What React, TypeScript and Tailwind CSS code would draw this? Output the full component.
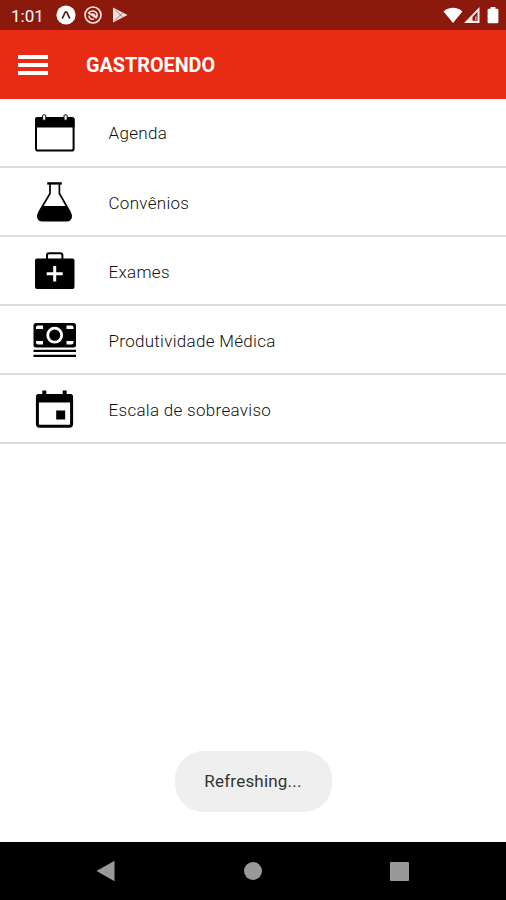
import { ReactNode } from "react";

type MenuItem = {
  label: string;
  icon: ReactNode;
};

const AgendaIcon = () => (
  <svg viewBox="0 0 48 48" className="w-12 h-12">
    <rect x="5" y="8" width="37.6" height="32.5" rx="1.8" fill="#fff" stroke="#000" strokeWidth="2" />
    <path d="M4 17.4V9.2a2 2 0 0 1 2-2h35.5a2 2 0 0 1 2 2v8.2z" />
    <rect x="11.6" y="4.8" width="3.2" height="5.4" rx="1" fill="#fff" stroke="#000" />
    <rect x="33" y="4.8" width="3.2" height="5.4" rx="1" fill="#fff" stroke="#000" />
  </svg>
);

const FlaskIcon = () => (
  <svg viewBox="0 0 48 48" className="w-12 h-12">
    <path d="M16.2 3.2h14.6v2.4H16.2z" />
    <path
      d="M19 4.500v10L8.400 32.500c-2.600 4.600-1.800 8.700 3.200 8.700h23.800c5 0 5.800-4.100 3.200-8.700L28.400 14.500v-10"
      fill="none"
      stroke="#000"
      strokeWidth="1.700"
    />
    <path d="M12 27h23l4.400 6.600c2.400 4.400 1.400 8.900-3.600 8.900H11.200c-5 0-6-4.500-3.600-8.900z" />
  </svg>
);

const ExamIcon = () => (
  <svg viewBox="0 0 48 48" className="w-12 h-12">
    <path d="M16 11V7.400a2.200 2.200 0 0 1 2.200-2.200h11a2.200 2.200 0 0 1 2.200 2.200V11" fill="none" stroke="#000" strokeWidth="2" />
    <rect x="4" y="10.500" width="39.500" height="30.500" rx="2" />
    <path d="M23.700 18v15.500M15.700 25.700h16" stroke="#fff" strokeWidth="3" />
  </svg>
);

const MoneyIcon = () => (
  <svg viewBox="0 0 48 48" className="w-12 h-12">
    <rect x="2.500" y="6" width="42.500" height="24.500" rx="2.500" />
    <circle cx="23.700" cy="18.200" r="7" fill="none" stroke="#fff" strokeWidth="2.800" />
    <path
      d="M5 12v-1.400a2 2 0 0 1 2-2h5V12zM42.500 12v-1.400a2 2 0 0 0-2-2h-5V12zM5 24v1.600a2 2 0 0 0 2 2h5V24zM42.500 24v1.600a2 2 0 0 1-2 2h-5V24z"
      fill="#fff"
    />
    <path d="M2.500 33.900H45M2.500 38.900H45" stroke="#000" strokeWidth="2.400" />
  </svg>
);

const ScheduleIcon = () => (
  <svg viewBox="0 0 48 48" className="w-12 h-12">
    <rect x="6.400" y="9.500" width="34.200" height="30.800" rx="2.200" fill="#fff" stroke="#000" strokeWidth="3" />
    <path d="M5 16.500V11a3 3 0 0 1 3-3h31a3 3 0 0 1 3 3v5.500z" />
    <path d="M11.300 4.600h4V10h-4zM31.700 4.600h4V10h-4zM25.200 24.600h9v9h-9z" />
  </svg>
);

const items: MenuItem[] = [
  { label: "Agenda", icon: <AgendaIcon /> },
  { label: "Convênios", icon: <FlaskIcon /> },
  { label: "Exames", icon: <ExamIcon /> },
  { label: "Produtividade Médica", icon: <MoneyIcon /> },
  { label: "Escala de sobreaviso", icon: <ScheduleIcon /> },
];

const StatusBar = () => (
  <div className="flex items-center justify-between h-[30px] bg-[#8b1a0c] pl-[11px] pr-[7px] text-white">
    <div className="flex items-center">
      <span className="w-[45px] text-[17px] leading-none pt-0.5">1:01</span>
      <svg viewBox="0 0 20 20" className="w-5 h-5">
        <circle cx="10" cy="10" r="9.6" fill="#fff" />
        <path d="M6.200 13.600L9.300 7h1.400l3.100 6.600" fill="none" stroke="#54200f" strokeWidth="1.700" />
      </svg>
      <svg viewBox="0 0 20 20" className="w-5 h-5 ml-[7px]" fill="none" stroke="#fbe3df">
        <circle cx="10" cy="10" r="8" strokeWidth="1.700" />
        <path d="M6 7.500C8 5.400 12 5.400 13.600 8c1 2 .4 3.800-.6 5M6 10.500c0 2.600 2.200 4.200 5 3.800M5 7.500l8.500 5.500M8.500 9.200c2-.8 3.600.4 3.500 2.400" strokeWidth="1.500" />
      </svg>
      <svg viewBox="0 0 16 16" className="w-4 h-4 ml-[9px]">
        <path d="M1 .5L15.500 8 1 15.500z" fill="#f6e2df" />
        <path d="M3 2.500L10.500 10M3 13.500L10.500 6" stroke="#a65b52" strokeWidth=".9" />
      </svg>
    </div>
    <div className="flex items-center">
      <svg viewBox="0 0 20 18" className="w-5 h-[18px]">
        <path d="M10 17L.600 5.400C5.500.400 14.500.400 19.400 5.400z" fill="#fff" />
      </svg>
      <svg viewBox="0 0 18 18" className="w-[18px] h-[18px]">
        <path d="M1 17L16.500 1v16z" fill="#fbe9e7" />
        <path d="M9.500 14.800V11l5-5.200v9z" fill="#8b1a0c" />
        <path d="M12 14v-3l1.500-1.500V14z" fill="#d79d96" />
      </svg>
      <svg viewBox="0 0 12 18" className="w-3 h-[18px] ml-1.5">
        <path d="M3.600 1h4.800v1.800h1.800a1.200 1.200 0 0 1 1.200 1.200v12a1.200 1.200 0 0 1-1.200 1.200H1.800A1.200 1.200 0 0 1 .6 16V4a1.200 1.200 0 0 1 1.200-1.200h1.800z" fill="#fff" />
      </svg>
    </div>
  </div>
);

const Header = () => (
  <header className="flex items-center h-[68.5px] bg-[#e72b15] pt-0.5 pl-[17.5px] text-white">
    <button className="flex flex-col justify-between w-[30.5px] h-[20px]">
      <span className="w-full h-1 bg-white" />
      <span className="w-full h-1 bg-white" />
      <span className="w-full h-1 bg-white" />
    </button>
    <h1 className="ml-[38px] pt-0.5 text-[19.8px] font-bold leading-none">GASTROENDO</h1>
  </header>
);

const NavBar = () => (
  <nav className="h-[58px] bg-black pl-[95px] pr-[97px] flex items-center justify-between">
    <svg viewBox="0 0 20 22" className="w-5 h-[22px]">
      <path d="M1.500 11L19.500 .7v20.600z" fill="#999" />
    </svg>
    <span className="w-[18px] h-[18px] rounded-full bg-[#999]" />
    <span className="w-[19px] h-[19px] rounded-[1px] bg-[#999]" />
  </nav>
);

const App = () => {
  return (
    <div className="flex flex-col w-[506px] h-[900px] bg-white overflow-hidden font-['Roboto',sans-serif]">
      <StatusBar />
      <Header />
      <main className="flex-1 flex flex-col">
        <ul>
          {items.map((item) => (
            <li
              key={item.label}
              className="flex items-center h-[69.2px] border-b-2 border-[#dcdcdc] pt-[3px] pl-[31px]"
            >
              {item.icon}
              <span className="ml-[29.5px] pt-px text-[17px] tracking-[0.3px] text-[#111] font-light">
                {item.label}
              </span>
            </li>
          ))}
        </ul>
        <div className="mt-auto mb-[30px] self-center flex items-center justify-center w-[157px] h-[61px] pt-px rounded-[28px] bg-[#efefef] text-[17px] tracking-[0.2px] text-[#333]">
          Refreshing...
        </div>
      </main>
      <NavBar />
    </div>
  );
};

export default App;
